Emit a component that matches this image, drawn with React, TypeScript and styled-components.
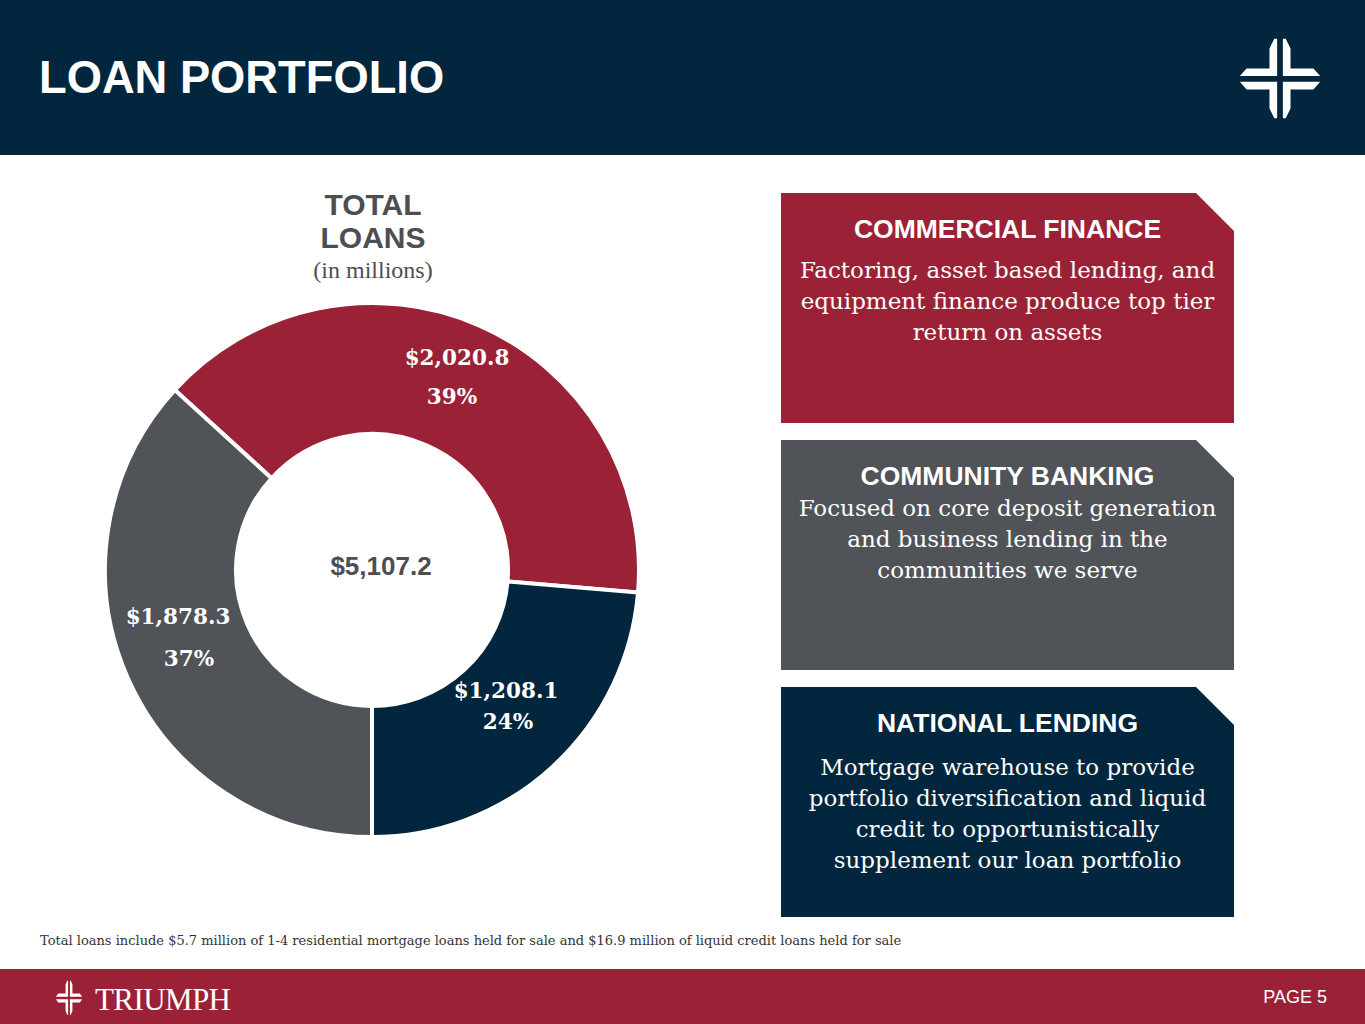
import React from "react";
import styled, { createGlobalStyle } from "styled-components";

const NAVY = "#02263d";
const RED = "#9b2236";
const GRAY = "#505358";
const TEXT_GRAY = "#4d4e52";

const Global = createGlobalStyle`
  html, body { margin: 0; padding: 0; background: #ffffff; }
  body { font-family: "Liberation Sans", Arial, sans-serif; }
  * { box-sizing: border-box; }
`;

const Page = styled.div`
  width: 1365px;
  height: 1024px;
  display: flex;
  flex-direction: column;
  overflow: hidden;
`;

const Header = styled.header`
  height: 155px;
  flex: 0 0 155px;
  background: ${NAVY};
  display: flex;
  align-items: center;
  justify-content: space-between;
  padding: 0 42px 0 39px;
`;

const Title = styled.h1`
  margin: 0;
  color: #ffffff;
  font-family: "Liberation Sans", Arial, sans-serif;
  font-weight: 700;
  font-size: 45.3px;
  line-height: 1;
`;

const Main = styled.main`
  flex: 1 1 auto;
  display: flex;
  flex-direction: column;
  padding-top: 33px;
`;

const Content = styled.div`
  display: grid;
  grid-template-columns: 746px 453px;
  column-gap: 35px;
  height: 729px;
`;

const ChartColumn = styled.section`
  display: flex;
  flex-direction: column;
  align-items: center;
`;

const ChartTitle = styled.div`
  font-family: "Liberation Sans", Arial, sans-serif;
  font-weight: 700;
  font-size: 30px;
  line-height: 33px;
  color: ${TEXT_GRAY};
  text-align: center;
`;

const ChartSub = styled.div`
  font-family: "Liberation Serif", "Times New Roman", serif;
  font-size: 24px;
  line-height: 30px;
  color: ${TEXT_GRAY};
  text-align: center;
  margin-top: 1px;
`;

const ChartBox = styled.div`
  margin-top: 17px;
  width: 536px;
  height: 536px;
  margin-left: -2px;
`;

const CardColumn = styled.section`
  display: flex;
  flex-direction: column;
  gap: 17px;
  padding-top: 5px;
`;

const Card = styled.div<{ $bg: string }>`
  height: 230px;
  background: ${(p) => p.$bg};
  clip-path: polygon(0 0, calc(100% - 38px) 0, 100% 38px, 100% 100%, 0 100%);
  color: #ffffff;
  text-align: center;
  padding: 21px 4px 0 4px;
`;

const CardTitle = styled.div`
  font-family: "Liberation Sans", Arial, sans-serif;
  font-weight: 700;
  font-size: 26.5px;
  line-height: 30px;
`;

const CardBody = styled.div<{ $gap: number }>`
  margin-top: ${(p) => p.$gap}px;
  font-family: "DejaVu Serif", Georgia, serif;
  font-size: 23px;
  line-height: 31px;
`;

const Line = styled.span`
  display: block;
  white-space: nowrap;
`;

const Footnote = styled.div`
  margin-top: 14px;
  padding-left: 40px;
  font-family: "DejaVu Serif", Georgia, serif;
  font-size: 13px;
  line-height: 20px;
  color: #333333;
  white-space: nowrap;
`;

const Footer = styled.footer`
  height: 55px;
  flex: 0 0 55px;
  background: ${RED};
  display: flex;
  align-items: center;
  justify-content: space-between;
  padding: 0 38px 0 55px;
`;

const Brand = styled.div`
  display: flex;
  align-items: center;
  gap: 12px;
  padding-top: 2px;
`;

const BrandName = styled.span`
  font-family: "Liberation Serif", "Times New Roman", serif;
  font-size: 31px;
  line-height: 1;
  color: #ffffff;
  letter-spacing: -0.6px;
  padding-top: 3px;
`;

const PageNo = styled.span`
  font-family: "Liberation Sans", Arial, sans-serif;
  font-size: 18px;
  color: #ffffff;
  padding-top: 2px;
`;

const CrossMark: React.FC<{ w: number; h: number }> = ({ w, h }) => (
  <svg width={w} height={h} viewBox="0 0 90 90" preserveAspectRatio="none">
    <g fill="#ffffff">
      <polygon points="42,4 42,43 3,43 10,35 34,35 34,14 39,4" />
      <polygon points="48,4 48,43 87,43 80,35 56,35 56,14 51,4" />
      <polygon points="42,87 42,49 3,49 10,57 34,57 34,77 39,87" />
      <polygon points="48,87 48,49 87,49 80,57 56,57 56,77 51,87" />
    </g>
  </svg>
);

type Slice = { value: number; color: string };

const slices: Slice[] = [
  { value: 2020.8, color: RED },
  { value: 1208.1, color: NAVY },
  { value: 1878.3, color: GRAY },
];

const polar = (cx: number, cy: number, r: number, deg: number) => {
  const a = ((deg - 90) * Math.PI) / 180;
  return [cx + r * Math.cos(a), cy + r * Math.sin(a)];
};

const arcPath = (cx: number, cy: number, R: number, r: number, a0: number, a1: number) => {
  const large = a1 - a0 > 180 ? 1 : 0;
  const [x0, y0] = polar(cx, cy, R, a0);
  const [x1, y1] = polar(cx, cy, R, a1);
  const [x2, y2] = polar(cx, cy, r, a1);
  const [x3, y3] = polar(cx, cy, r, a0);
  return `M${x0} ${y0} A${R} ${R} 0 ${large} 1 ${x1} ${y1} L${x2} ${y2} A${r} ${r} 0 ${large} 0 ${x3} ${y3} Z`;
};

const LabelText = styled.text`
  font-family: "DejaVu Serif", Georgia, serif;
  font-weight: 700;
  font-size: 21.5px;
  fill: #ffffff;
`;

const CenterText = styled.text`
  font-family: "Liberation Sans", Arial, sans-serif;
  font-weight: 700;
  font-size: 26px;
  fill: ${TEXT_GRAY};
`;

const Donut: React.FC = () => {
  const total = slices.reduce((s, x) => s + x.value, 0);
  const navyEnd = 180;
  const navySpan = (slices[1].value / total) * 360;
  const redSpan = (slices[0].value / total) * 360;
  const navyStart = navyEnd - navySpan;
  const redStart = navyStart - redSpan;
  const ranges = [
    { c: RED, a0: redStart, a1: navyStart },
    { c: NAVY, a0: navyStart, a1: navyEnd },
    { c: GRAY, a0: navyEnd, a1: redStart + 360 },
  ];
  return (
    <svg width={536} height={536} viewBox="0 0 536 536">
      {ranges.map((r, i) => (
        <path
          key={i}
          d={arcPath(268, 268, 267, 136, r.a0, r.a1)}
          fill={r.c}
          stroke="#ffffff"
          strokeWidth={4}
        />
      ))}
      <LabelText x={353} y={63} textAnchor="middle">$2,020.8</LabelText>
      <LabelText x={348} y={102} textAnchor="middle">39%</LabelText>
      <LabelText x={74} y={322} textAnchor="middle">$1,878.3</LabelText>
      <LabelText x={85} y={364} textAnchor="middle">37%</LabelText>
      <LabelText x={402} y={396} textAnchor="middle">$1,208.1</LabelText>
      <LabelText x={404} y={427} textAnchor="middle">24%</LabelText>
      <CenterText x={277} y={273} textAnchor="middle">$5,107.2</CenterText>
    </svg>
  );
};

const cards = [
  {
    bg: RED,
    title: "COMMERCIAL FINANCE",
    gap: 11,
    lines: ["Factoring, asset based lending, and", "equipment finance produce top tier", "return on assets"],
  },
  {
    bg: GRAY,
    title: "COMMUNITY BANKING",
    gap: 2,
    lines: ["Focused on core deposit generation", "and business lending in the", "communities we serve"],
  },
  {
    bg: NAVY,
    title: "NATIONAL LENDING",
    gap: 14,
    lines: [
      "Mortgage warehouse to provide",
      "portfolio diversification and liquid",
      "credit to opportunistically",
      "supplement our loan portfolio",
    ],
  },
];

export default function App() {
  return (
    <Page>
      <Global />
      <Header>
        <Title>LOAN PORTFOLIO</Title>
        <CrossMark w={86} h={86} />
      </Header>
      <Main>
        <Content>
          <ChartColumn>
            <ChartTitle>
              TOTAL
              <br />
              LOANS
            </ChartTitle>
            <ChartSub>(in millions)</ChartSub>
            <ChartBox>
              <Donut />
            </ChartBox>
          </ChartColumn>
          <CardColumn>
            {cards.map((c) => (
              <Card key={c.title} $bg={c.bg}>
                <CardTitle>{c.title}</CardTitle>
                <CardBody $gap={c.gap}>
                  {c.lines.map((l) => (
                    <Line key={l}>{l}</Line>
                  ))}
                </CardBody>
              </Card>
            ))}
          </CardColumn>
        </Content>
        <Footnote>
          Total loans include $5.7 million of 1-4 residential mortgage loans held for sale and $16.9 million of liquid
          credit loans held for sale
        </Footnote>
      </Main>
      <Footer>
        <Brand>
          <CrossMark w={28} h={37} />
          <BrandName>TRIUMPH</BrandName>
        </Brand>
        <PageNo>PAGE 5</PageNo>
      </Footer>
    </Page>
  );
}
